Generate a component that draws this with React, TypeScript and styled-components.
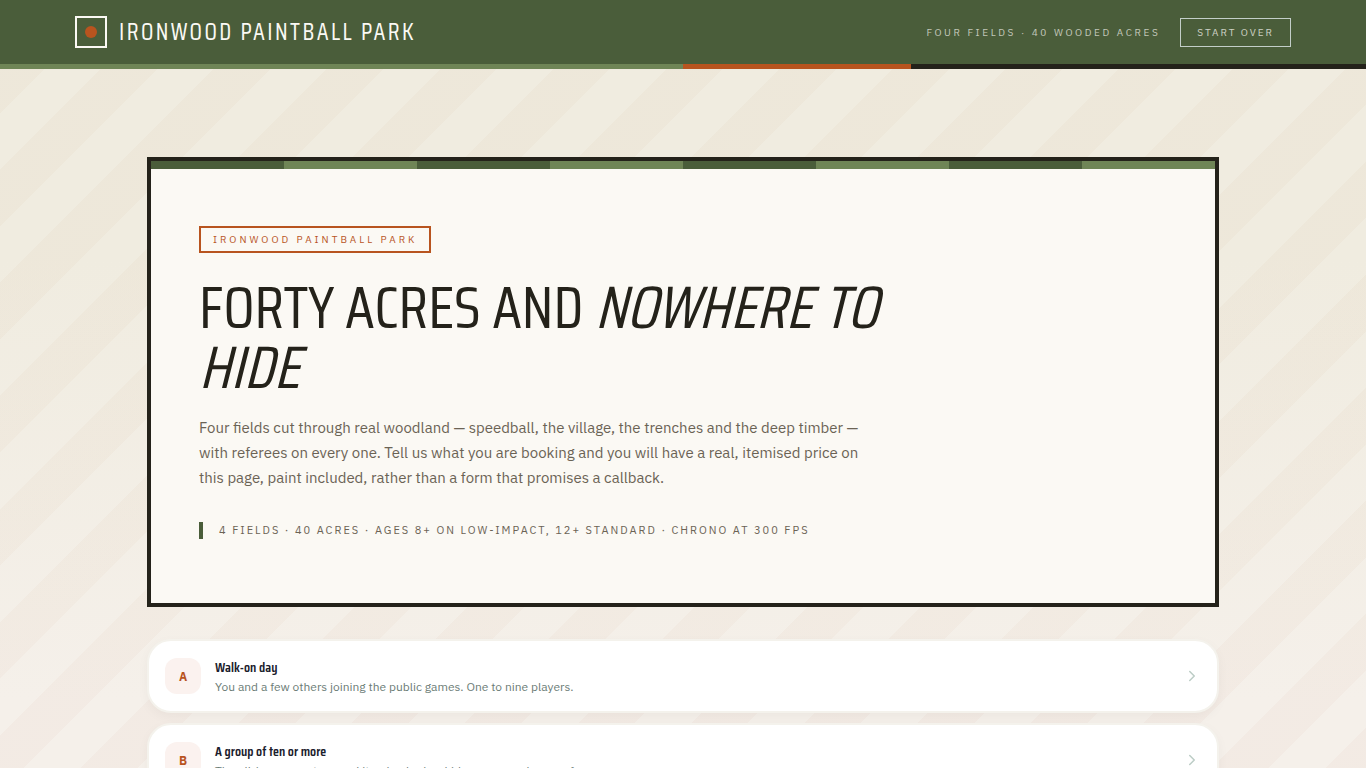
import React from 'react';
import styled, { createGlobalStyle } from 'styled-components';
import { ChevronRight } from 'lucide-react';

const display = '"Saira Condensed", "Roboto Condensed", "Liberation Sans", sans-serif';
const body = '"IBM Plex Sans", Roboto, "Liberation Sans", sans-serif';

const colors = {
  forest: '#4a5d3a',
  moss: '#6f8556',
  rust: '#b8541f',
  ink: '#24221a',
  paper: '#fbf9f4',
  stone: '#6b6355',
};

const GlobalStyle = createGlobalStyle`
  *, *::before, *::after { box-sizing: border-box; }
  html { background: #f5f0eb; scrollbar-width: none; }
  body {
    margin: 0;
    font-family: ${body};
    line-height: 1.5;
    color: ${colors.ink};
  }
  h1, h2, p, ul { margin: 0; padding: 0; }
`;

const Page = styled.div`
  min-height: 100vh;
  background:
    repeating-linear-gradient(135deg, transparent 0 40px, rgba(184, 84, 31, 0.03) 40px 80px),
    linear-gradient(180deg, #f0ece0 0, #f0ece0 260px, #f5f0ea 700px);
`;

const Header = styled.header`
  background: ${colors.forest};
`;

const HeaderInner = styled.div`
  display: flex;
  align-items: center;
  justify-content: space-between;
  max-width: 1280px;
  height: 64px;
  margin: 0 auto;
  padding: 0 32px;
`;

const HeaderStripe = styled.div`
  height: 5px;
  background: linear-gradient(
    90deg,
    ${colors.moss} 0 50%,
    ${colors.rust} 50% 66.67%,
    ${colors.ink} 66.67%
  );
`;

const Brand = styled.a`
  display: flex;
  align-items: center;
  gap: 12px;
  color: ${colors.paper};
  font: 400 24px/32px ${display};
  letter-spacing: 0.1em;
  text-transform: uppercase;
  text-decoration: none;
`;

const BrandMark = styled.span`
  display: grid;
  place-items: center;
  width: 32px;
  height: 32px;
  border: 2px solid ${colors.paper};

  &::after {
    content: '';
    width: 12px;
    height: 12px;
    border-radius: 50%;
    background: ${colors.rust};
  }
`;

const HeaderSide = styled.div`
  display: flex;
  align-items: center;
  gap: 20px;
`;

const Tagline = styled.span`
  color: rgba(251, 249, 244, 0.7);
  font-size: 10px;
  letter-spacing: 0.26em;
  text-transform: uppercase;
`;

const RestartButton = styled.button`
  padding: 7px 16px;
  border: 1px solid #c3cec9;
  background: transparent;
  color: rgba(251, 249, 244, 0.75);
  font: 400 10px/13px ${body};
  letter-spacing: 0.2em;
  text-transform: uppercase;
  cursor: pointer;
`;

const Main = styled.main`
  max-width: 1120px;
  margin: 0 auto;
  padding: 88px 24px 64px;
`;

const Hero = styled.section`
  border: 4px solid ${colors.ink};
  background: ${colors.paper};
`;

const HeroStripe = styled.div`
  height: 8px;
  background: repeating-linear-gradient(
    90deg,
    ${colors.forest} 0 12.5%,
    ${colors.moss} 12.5% 25%
  );
`;

const HeroBody = styled.div`
  display: flex;
  flex-direction: column;
  align-items: flex-start;
  padding: 57px 48px 64px;
`;

const Eyebrow = styled.p`
  padding: 4px 12px;
  border: 2px solid ${colors.rust};
  color: ${colors.rust};
  font-size: 10px;
  line-height: 15px;
  letter-spacing: 0.3em;
  text-transform: uppercase;
`;

const Title = styled.h1`
  max-width: 760px;
  margin-top: 24px;
  font: 400 60px/60px ${display};
  text-transform: uppercase;
`;

const Lead = styled.p`
  max-width: 680px;
  margin-top: 19px;
  color: ${colors.stone};
  font-size: 15px;
  line-height: 1.65;
`;

const Facts = styled.p`
  margin-top: 32px;
  padding-left: 16px;
  border-left: 4px solid ${colors.forest};
  color: ${colors.stone};
  font-size: 11px;
  line-height: 17px;
  letter-spacing: 0.18em;
  text-transform: uppercase;
`;

const Options = styled.ul`
  display: flex;
  flex-direction: column;
  gap: 10px;
  margin-top: 32px;
  list-style: none;
`;

const OptionButton = styled.button`
  display: flex;
  align-items: center;
  gap: 14px;
  width: 100%;
  padding: 16px;
  border: 2px solid #f4f2ec;
  border-radius: 24px;
  background: #fff;
  box-shadow: 0 4px 12px rgba(36, 34, 26, 0.04);
  font-family: ${body};
  text-align: left;
  cursor: pointer;
`;

const OptionKey = styled.span`
  display: grid;
  place-items: center;
  width: 36px;
  height: 36px;
  border-radius: 12px;
  background: #fbf2ef;
  color: ${colors.rust};
  font-size: 12px;
  font-weight: 700;
`;

const OptionText = styled.span`
  display: flex;
  flex: 1;
  flex-direction: column;
  gap: 2px;
`;

const OptionTitle = styled.span`
  color: #1a202c;
  font: 600 14px/20px ${display};
`;

const OptionHint = styled.span`
  color: #6b7c76;
  font-size: 12px;
  line-height: 16px;
`;

const options = [
  { key: 'A', title: 'Walk-on day', hint: 'You and a few others joining the public games. One to nine players.' },
  { key: 'B', title: 'A group of ten or more', hint: 'The all-in group rate, a real itemised price, kids groups and your referees.' },
];

export default function App() {
  return (
    <Page>
      <GlobalStyle />
      <Header>
        <HeaderInner>
          <Brand href="#">
            <BrandMark />
            Ironwood Paintball Park
          </Brand>
          <HeaderSide>
            <Tagline>Four fields · 40 wooded acres</Tagline>
            <RestartButton type="button">Start over</RestartButton>
          </HeaderSide>
        </HeaderInner>
        <HeaderStripe />
      </Header>
      <Main>
        <Hero>
          <HeroStripe />
          <HeroBody>
            <Eyebrow>Ironwood Paintball Park</Eyebrow>
            <Title>
              Forty acres and <em>nowhere to hide</em>
            </Title>
            <Lead>
              Four fields cut through real woodland — speedball, the village, the trenches and the deep
              timber — with referees on every one. Tell us what you are booking and you will have a real,
              itemised price on this page, paint included, rather than a form that promises a callback.
            </Lead>
            <Facts>4 fields · 40 acres · Ages 8+ on low-impact, 12+ standard · Chrono at 300 fps</Facts>
          </HeroBody>
        </Hero>
        <Options>
          {options.map((option) => (
            <li key={option.key}>
              <OptionButton type="button">
                <OptionKey>{option.key}</OptionKey>
                <OptionText>
                  <OptionTitle>{option.title}</OptionTitle>
                  <OptionHint>{option.hint}</OptionHint>
                </OptionText>
                <ChevronRight size={18} color="#bccdc6" aria-hidden />
              </OptionButton>
            </li>
          ))}
        </Options>
      </Main>
    </Page>
  );
}
